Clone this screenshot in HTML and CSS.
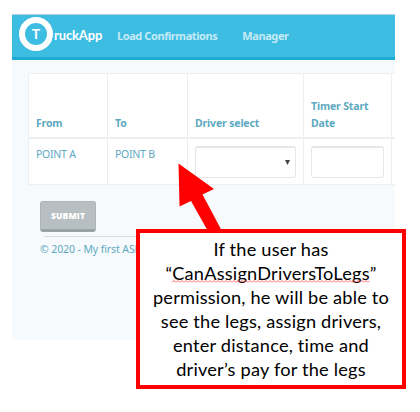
FILE: index.html
```html
<!DOCTYPE html>
<html lang="en">
<head>
<meta charset="utf-8">
<title>TruckApp</title>
<link rel="stylesheet" href="styles.css">
</head>
<body>
<div class="app">
  <header class="navbar">
    <div class="brand"><span class="brand-mark">T</span><span class="brand-name">ruckApp</span></div>
    <nav class="links"><a>Load Confirmations</a><a>Manager</a></nav>
  </header>
  <main>
    <div class="table">
      <div class="cell head"><span>From</span></div>
      <div class="cell head"><span>To</span></div>
      <div class="cell head"><span>Driver select</span></div>
      <div class="cell head"><span>Timer Start<br>Date</span></div>
      <div class="cell head"></div>
      <div class="cell">POINT A</div>
      <div class="cell">POINT B</div>
      <div class="cell"><div class="field"><svg class="caret" viewBox="0 0 5 5"><path d="M0 0H5L2.5 5Z"/></svg></div></div>
      <div class="cell"><div class="field"></div></div>
      <div class="cell"></div>
    </div>
    <button class="submit">SUBMIT</button>
    <footer>© 2020 - My first ASP</footer>
  </main>
</div>
<svg class="arrow" viewBox="0 0 46 70"><path d="M.5 .5L36 26L24.5 31.5L45 70H31L13 38L1.5 43.5Z"/></svg>
<div class="callout">
  <span>If the user has</span>
  <span>“<span class="misspelled">CanAssignDriversToLegs<svg class="squiggle" width="100%" height="3"><defs><pattern id="wave" width="4" height="3" patternUnits="userSpaceOnUse"><path d="M0 2.5L2 .5L4 2.5"/></pattern></defs><rect class="wave-fill" width="100%" height="3" fill="url(#wave)"/></svg></span>”</span>
  <span>permission, he will be able to</span>
  <span>see the legs, assign drivers,</span>
  <span>enter distance, time and</span>
  <span>driver’s pay for the legs</span>
</div>
</body>
</html>
```
FILE: styles.css
```css
* { box-sizing: border-box; }
body {
  margin: 0;
  width: 420px;
  height: 412px;
  padding: 14px 0 0 12px;
  background: #fff;
  overflow: hidden;
  position: relative;
  font-family: "Noto Sans", sans-serif;
}
.app {
  width: 383px;
  height: 326px;
  background: #f6fafc;
  overflow: hidden;
  color: #5da9c1;
}
.navbar {
  height: 46px;
  display: flex;
  align-items: flex-start;
  background: #3dbde1;
  border-top: 1px solid #b3cfdd;
  border-bottom: 3px solid #1eacd2;
}
.brand {
  display: flex;
  width: 105px;
  padding: 2px 0 0 7px;
  color: #fff;
  font: bold 14px/34px Lato, sans-serif;
}
.brand-mark {
  width: 34px;
  height: 34px;
  border: 6px solid #fff;
  border-radius: 50%;
  line-height: 21px;
  text-align: center;
  flex: none;
}
.brand-name {
  font-size: 13px;
  line-height: 37px;
  margin-left: 1px;
  letter-spacing: -.15px;
}
.links {
  display: flex;
  gap: 25px;
  color: #c6eaf6;
  font-size: 11px;
  font-weight: 700;
  line-height: 42px;
  letter-spacing: -.42px;
}
main { padding: 13px 0 0 16px; }
.table {
  display: grid;
  grid-template-columns: 79px 80px 116px 88px 20px;
  grid-template-rows: 65px 46px;
  width: 383px;
  background: #fff;
  border-top: 1px solid #ebeff0;
  font-size: 10.5px;
  line-height: 17px;
}
.cell {
  border-left: 1px solid #ebeff0;
  border-bottom: 1px solid #ebeff0;
  padding: 7px 7px 0;
  letter-spacing: -.25px;
}
.head {
  display: flex;
  align-items: flex-end;
  padding: 0 0 5px 7px;
  border-bottom: 2px solid #ebeff0;
  font-weight: 700;
  white-space: nowrap;
  letter-spacing: -.15px;
}
.field {
  height: 32px;
  border: 1px solid #e4e7e8;
  border-width: 2px 1px 1px;
  border-radius: 3px;
  background: #fff;
  display: flex;
  align-items: center;
  justify-content: flex-end;
  padding-right: 5px;
}
.caret { width: 5px; height: 5px; fill: #444; }
.submit {
  display: block;
  width: 56px;
  height: 31px;
  margin: 16px 0 0 12px;
  padding: 0;
  border: 1px solid #adb5b7;
  border-bottom: 3px solid #98a2a5;
  border-radius: 3px;
  background: #b7bfc2;
  color: #fff;
  font: 800 8.5px/26px "Open Sans", sans-serif;
  letter-spacing: .15px;
}
footer {
  margin: 4px 0 0 16px;
  border-top: 1px solid #d8dddf;
  font-size: 10.5px;
  line-height: 25px;
  letter-spacing: -.1px;
  text-indent: -4px;
  white-space: nowrap;
}
.arrow {
  position: absolute;
  left: 178px;
  top: 163px;
  width: 46px;
  height: 70px;
  fill: #f00;
}
.callout {
  position: absolute;
  left: 136px;
  top: 229px;
  width: 270px;
  height: 160px;
  padding: 4px 0 0;
  border: 4px solid #f00;
  background: #fff;
  color: #000;
  font: 18.2px/24px Lato, sans-serif;
  letter-spacing: .2px;
  text-align: center;
  white-space: nowrap;
}
.callout > span { display: block; }
.misspelled { position: relative; }
.squiggle {
  position: absolute;
  left: 0;
  bottom: 1px;
  fill: none;
  stroke: #f33;
  stroke-width: .8;
}
.wave-fill { stroke: none; }
```
